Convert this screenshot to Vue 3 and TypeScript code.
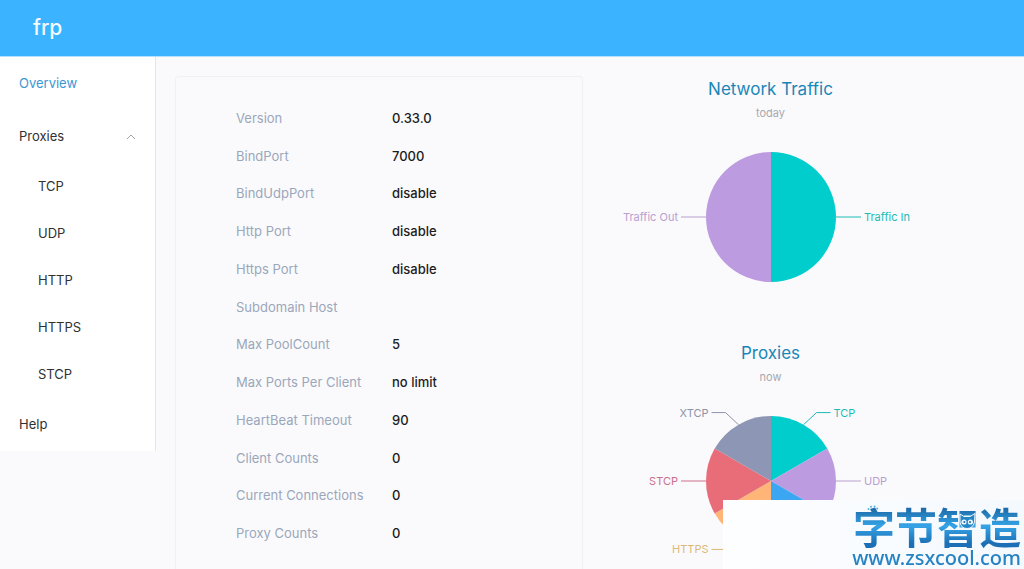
<script setup lang="ts">
import { ref } from 'vue'

interface Slice {
  name: string
  color: string
  labelColor?: string
}

interface Chart {
  title: string
  subtitle: string
  slices: Slice[]
}

const info: [string, string][] = [
  ['Version', '0.33.0'],
  ['BindPort', '7000'],
  ['BindUdpPort', 'disable'],
  ['Http Port', 'disable'],
  ['Https Port', 'disable'],
  ['Subdomain Host', ''],
  ['Max PoolCount', '5'],
  ['Max Ports Per Client', 'no limit'],
  ['HeartBeat Timeout', '90'],
  ['Client Counts', '0'],
  ['Current Connections', '0'],
  ['Proxy Counts', '0'],
]

const proxyTypes = ['TCP', 'UDP', 'HTTP', 'HTTPS', 'STCP']
const open = ref(true)

// A slice without a labelColor is drawn without a label.
const charts: Chart[] = [
  {
    title: 'Network Traffic',
    subtitle: 'today',
    slices: [
      { name: 'Traffic In', color: '#02cdcd', labelColor: '#1cbcb6' },
      { name: 'Traffic Out', color: '#bd9be0', labelColor: '#b9a0d0' },
    ],
  },
  {
    title: 'Proxies',
    subtitle: 'now',
    slices: [
      { name: 'TCP', color: '#02cdcd', labelColor: '#1cbcb6' },
      { name: 'UDP', color: '#bd9be0', labelColor: '#b9a0d0' },
      { name: 'HTTP', color: '#3ba7f2' },
      { name: 'HTTPS', color: '#ffb578', labelColor: '#dcb974' },
      { name: 'STCP', color: '#e86d78', labelColor: '#cc6f8c' },
      { name: 'XTCP', color: '#8d96b4', labelColor: '#8d93a8' },
    ],
  },
]

const R = 65
const CX = 181
const CY = 85

function point(angle: number, r: number): [number, number] {
  return [CX + r * Math.sin(angle), CY - r * Math.cos(angle)]
}

function layout(slices: Slice[]) {
  const step = (Math.PI * 2) / slices.length
  return slices.map((s, i) => {
    const [x0, y0] = point(i * step, R)
    const [x1, y1] = point((i + 1) * step, R)
    const mid = (i + 0.5) * step
    const [mx, my] = point(mid, R)
    const [ex, ey] = point(mid, R + 14)
    const dir = Math.sin(mid) > 0 ? 1 : -1
    const flat = Math.abs(Math.cos(mid)) < 0.01
    const endX = flat ? mx + dir * 25 : ex + dir * 20
    return {
      ...s,
      path: `M${CX} ${CY}L${x0} ${y0}A${R} ${R} 0 0 1 ${x1} ${y1}Z`,
      line: `${mx},${my} ${flat ? mx : ex + dir * 6},${ey} ${endX},${ey}`,
      tx: endX + dir * 3,
      ty: ey + 4,
      anchor: (dir > 0 ? 'start' : 'end') as 'start' | 'end',
    }
  })
}

const drawn = charts.map((c) => ({ ...c, parts: layout(c.slices) }))
</script>

<template>
  <div class="page">
    <header class="top"><a href="#" class="brand">frp</a></header>
    <div class="body">
      <nav class="menu">
        <a href="#" class="item active">Overview</a>
        <button type="button" class="item group" :aria-expanded="open" @click="open = !open">
          <span>Proxies</span>
          <svg class="arrow" :class="{ closed: !open }" viewBox="0 0 10 6" aria-hidden="true">
            <path d="M1 5L5 1L9 5" />
          </svg>
        </button>
        <div v-if="open" class="sub">
          <a v-for="p in proxyTypes" :key="p" href="#" class="subitem">{{ p }}</a>
        </div>
        <a href="#" class="item">Help</a>
      </nav>
      <main class="content">
        <section class="card">
          <table class="info">
            <tbody>
              <tr v-for="[label, value] in info" :key="label">
                <th scope="row">{{ label }}</th>
                <td>{{ value }}</td>
              </tr>
            </tbody>
          </table>
        </section>
        <section class="charts">
          <article v-for="c in drawn" :key="c.title" class="chart">
            <h2>{{ c.title }}</h2>
            <p>{{ c.subtitle }}</p>
            <svg class="pie" viewBox="0 0 362 170" role="img" :aria-label="c.title">
              <g v-for="s in c.parts" :key="s.name">
                <path :d="s.path" :fill="s.color" />
                <template v-if="s.labelColor">
                  <polyline :points="s.line" fill="none" :stroke="s.labelColor" />
                  <text :x="s.tx" :y="s.ty" :text-anchor="s.anchor" :fill="s.labelColor">{{ s.name }}</text>
                </template>
              </g>
            </svg>
          </article>
        </section>
      </main>
    </div>
    <aside class="mark">
      <div class="logo">
        <span class="name">字节智造</span>
        <svg class="paw" viewBox="0 0 12 6" aria-hidden="true">
          <circle cx="1.5" cy="4" r="1" /><circle cx="4" cy="1.8" r="1" />
          <circle cx="7.5" cy="1.6" r="1" /><circle cx="10.2" cy="3.6" r="1" />
        </svg>
        <svg class="cat" viewBox="0 0 18 16" aria-hidden="true">
          <path d="M2 1L6 3.5H12L17 0.5L16.5 9Q15 15.5 9 15.5Q3 15.5 2 9Z" fill="#2386c6" stroke="#f4f9fe" />
          <circle cx="6" cy="9" r="2.6" fill="#e9f5fd" />
          <circle cx="12.4" cy="9" r="2.6" fill="#e9f5fd" />
          <circle cx="6.4" cy="9" r="1" fill="#17649e" />
          <circle cx="12" cy="9" r="1" fill="#17649e" />
        </svg>
      </div>
      <span class="url">www.zsxcool.com</span>
    </aside>
  </div>
</template>

<style>
body {
  margin: 0;
  background: #fafafc;
}
</style>

<style scoped>
.page {
  display: flex;
  flex-direction: column;
  height: 100vh;
  overflow: hidden;
  font-family: Inter, "Liberation Sans", sans-serif;
  font-size: 13px;
  color: #303133;
}
.top {
  flex: none;
  display: flex;
  align-items: center;
  padding: 0 33px;
  line-height: 56px;
  background: #3bb3ff;
  border-bottom: 1px solid #b4e0fd;
}
.brand {
  color: #f4fbff;
  font-size: 21px;
  font-weight: 500;
  text-decoration: none;
}
.body {
  flex: 1;
  min-height: 0;
  display: flex;
  align-items: flex-start;
}
.menu {
  flex: none;
  width: 155px;
  display: flex;
  flex-direction: column;
  background: #fff;
  border-right: 1px solid #e4e6ee;
}
.item,
.subitem {
  color: #303133;
  text-decoration: none;
}
.item {
  padding: 0 19px;
  line-height: 53px;
}
.item.active {
  color: #3a97d6;
}
.group {
  display: flex;
  align-items: center;
  justify-content: space-between;
  border: 0;
  background: none;
  font: inherit;
  line-height: 53px;
  text-align: left;
  cursor: pointer;
}
.arrow {
  width: 10px;
  height: 6px;
  fill: none;
  stroke: #a0a3aa;
}
.arrow.closed {
  transform: rotate(180deg);
}
.sub {
  display: flex;
  flex-direction: column;
}
.subitem {
  padding-left: 38px;
  line-height: 47px;
}
.content {
  flex: 1;
  align-self: stretch;
  min-width: 0;
  display: grid;
  grid-template-columns: 1fr 1fr;
  gap: 7px;
  padding: 19px 27px 0 19px;
}
.card {
  padding: 22px 60px;
  border: 1px solid #f1f1f5;
  border-bottom: 0;
  border-radius: 4px 4px 0 0;
}
.info {
  height: 453px;
  border-collapse: collapse;
}
.info th,
.info td {
  padding: 0;
  text-align: left;
  white-space: nowrap;
}
.info th {
  width: 156px;
  font-weight: 400;
  color: #9aa7bb;
}
.info td {
  color: #1c1c1e;
  font-weight: 500;
}
.charts {
  display: flex;
  flex-direction: column;
  align-items: flex-start;
}
.chart {
  width: 362px;
  height: 264px;
  text-align: center;
}
.chart h2 {
  margin: 0;
  font-size: 17px;
  line-height: 26px;
  font-weight: 400;
  color: #1a86b8;
}
.chart p {
  margin: 0 0 8px;
  font-size: 11px;
  line-height: 22px;
  color: #a8a8ae;
}
.pie {
  display: block;
  width: 362px;
  height: 170px;
  overflow: visible;
}
.pie text {
  font-size: 11px;
}
.mark {
  position: fixed;
  right: 0;
  bottom: 0;
  width: 301px;
  height: 69px;
  box-sizing: border-box;
  padding: 4px 3px 0 0;
  display: flex;
  flex-direction: column;
  align-items: flex-end;
  background: linear-gradient(90deg, #fdfeff, #f4f9fe);
}
.logo {
  position: relative;
  height: 44px;
}
.name {
  display: block;
  font-family: "Noto Sans CJK SC", sans-serif;
  font-size: 42px;
  line-height: 44px;
  font-weight: 700;
  color: transparent;
  background: linear-gradient(#1c6aa8 10%, #35a4e6 50%, #1c6fb4 90%);
  background-clip: text;
}
.paw {
  position: absolute;
  left: 14px;
  top: 1px;
  width: 12px;
  height: 6px;
  fill: #58b2e6;
}
.cat {
  position: absolute;
  left: 105px;
  top: 9px;
  width: 18px;
  height: 16px;
}
.url {
  font-family: "Noto Sans", sans-serif;
  font-size: 20px;
  line-height: 20px;
  font-weight: 500;
  color: #2583c4;
}
</style>
